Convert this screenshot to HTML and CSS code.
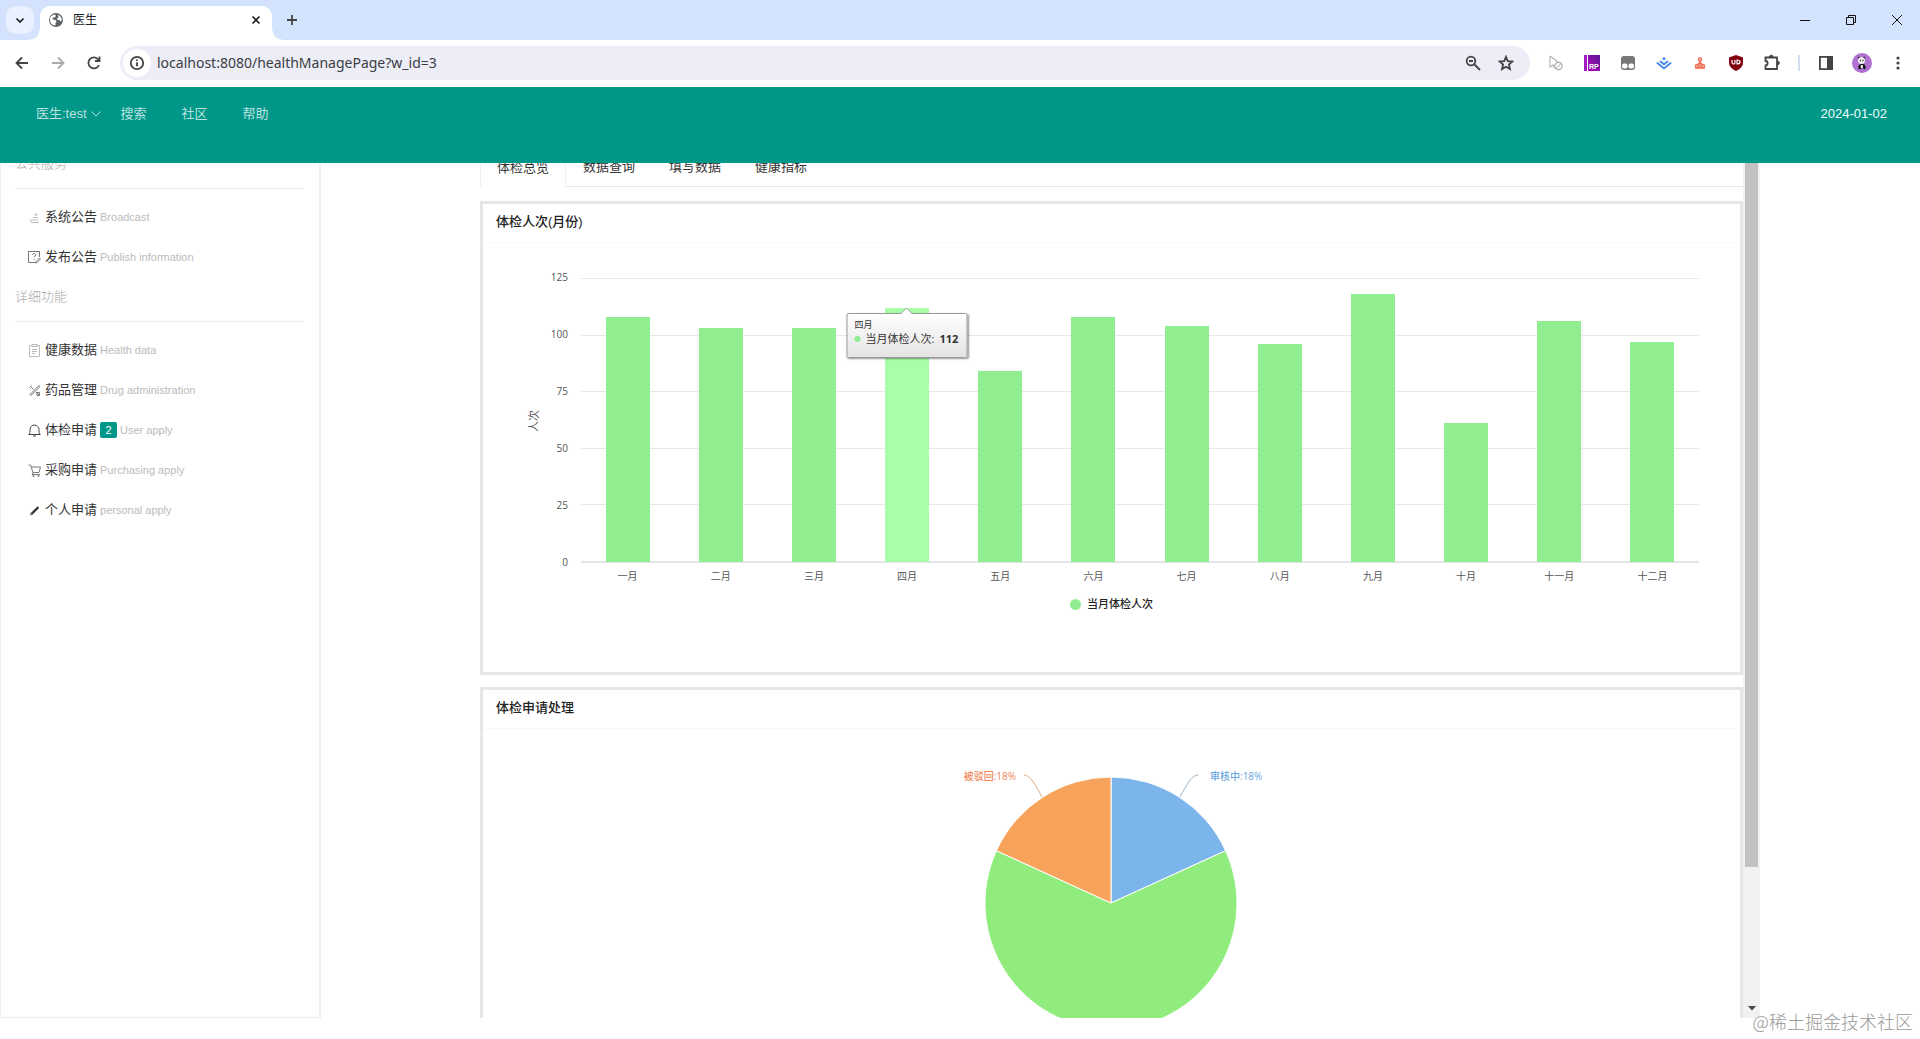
FILE: index.html
```html
<!DOCTYPE html>
<html lang="zh-CN">
<head>
<meta charset="utf-8">
<title>医生</title>
<link rel="stylesheet" href="styles.css">
</head>
<body>
<div class="tabstrip">
  <button class="tab-search" aria-label="搜索标签页"><svg width="12" height="12" viewBox="0 0 12 12"><path d="M2.500 4.500 6 8l3.500-3.500" class="ink"/></svg></button>
  <div class="browser-tab">
    <svg width="16" height="16" viewBox="0 0 16 16"><circle cx="8" cy="8" r="7" fill="#5f6368"/><path d="M2 6c1-2 3-3.500 5-3.500l1 1.500-1.500 1.500H5L4.500 7.500l3 .5 1 1.500-1 1.500v2.500C4 13.500 1.800 10.500 2 7.500zM10 2.800c2.500 1 3.800 3 3.900 5.500l-1.400 1.200-1-1.500H9.500L9 6.500l1.500-1z" fill="#fff"/></svg>
    <span class="tab-title">医生</span>
    <button class="plain" aria-label="关闭"><svg width="12" height="12" viewBox="0 0 12 12"><path d="M2.500 2.500l7 7m0-7-7 7" class="ink"/></svg></button>
  </div>
  <button class="new-tab plain" aria-label="新标签页"><svg width="14" height="14" viewBox="0 0 14 14"><path d="M7 2v10M2 7h10" class="grey-ink"/></svg></button>
  <div class="window-controls">
    <button class="plain" aria-label="最小化"><svg width="12" height="12" viewBox="0 0 12 12"><path d="M1 6.500h10" class="thin"/></svg></button>
    <button class="plain" aria-label="还原"><svg width="12" height="12" viewBox="0 0 12 12"><path d="M1.500 3.500h7v7h-7zM3.500 3.500v-2h7v7h-2" class="thin"/></svg></button>
    <button class="plain" aria-label="关闭窗口"><svg width="12" height="12" viewBox="0 0 12 12"><path d="M1 1l10 10M11 1 1 11" class="thin"/></svg></button>
  </div>
</div>

<div class="toolbar">
  <button class="tool plain" aria-label="后退"><svg width="16" height="16" viewBox="0 0 16 16"><path d="M14 8H3m5-5.500L2.500 8 8 13.500" class="grey-ink"/></svg></button>
  <button class="tool plain dim" aria-label="前进"><svg width="16" height="16" viewBox="0 0 16 16"><path d="M2 8h11M8 2.500 13.500 8 8 13.500" class="grey-ink"/></svg></button>
  <button class="tool plain" aria-label="刷新"><svg width="16" height="16" viewBox="0 0 16 16"><path d="M13 10A5.500 5.500 0 1 1 12.300 4.500L13 6M13.500 1.500V6H9" class="grey-ink"/></svg></button>
  <div class="omnibox">
    <span class="site-info"><svg width="16" height="16" viewBox="0 0 16 16"><circle cx="8" cy="8" r="6.200" class="grey-ink"/><path d="M8 7.300v4M8 4.500v1.600" class="grey-ink"/></svg></span>
    <input class="url" type="text" aria-label="地址" value="localhost:8080/healthManagePage?w_id=3">
    <button class="omni-btn plain" aria-label="缩放"><svg width="16" height="16" viewBox="0 0 16 16"><circle cx="6" cy="6" r="4.300" class="grey-ink"/><path d="M9.500 9.500 15 15M4 6h4" class="grey-ink"/></svg></button>
    <button class="omni-btn plain" aria-label="收藏"><svg width="16" height="16" viewBox="0 0 16 16"><path d="M8 1.800l1.800 4.300 4.600.4-3.500 3 1.100 4.600L8 11.700l-4 2.400 1.100-4.600-3.500-3 4.600-.4z" class="grey-ink"/></svg></button>
  </div>
  <button class="tool plain" aria-label="扩展 1"><svg width="16" height="16" viewBox="0 0 16 16"><path d="M2 1v11l3-2 1.500 3.500M2 1l8 6" fill="none" stroke="#b5b5b5" stroke-width="1.200"/><circle cx="10.500" cy="11" r="3.600" fill="#fff" stroke="#aaa" stroke-width="1.200"/><path d="M8 13.500l5-5" stroke="#aaa"/></svg></button>
  <button class="tool plain" aria-label="Axure RP"><svg width="16" height="16" viewBox="0 0 16 16"><defs><linearGradient id="rp" x1="0" y1="1" x2="1" y2="0"><stop offset="0" stop-color="#b010b8"/><stop offset="1" stop-color="#5a1098"/></linearGradient></defs><path fill="#a01cc0" d="M0 0h3v16H0z"/><path fill="url(#rp)" d="M4 0h12v16H4z"/><text x="5" y="14" class="rp">RP</text></svg></button>
  <button class="tool plain" aria-label="扩展 3"><svg width="16" height="16" viewBox="0 0 16 16"><rect x="1" y="1" width="14" height="14" rx="3" fill="#777"/><rect x="2" y="8.500" width="5.500" height="5" rx="2" fill="#fff"/><rect x="8.500" y="8.500" width="5.500" height="5" rx="2" fill="#fff"/></svg></button>
  <button class="tool plain" aria-label="掘金"><svg width="16" height="16" viewBox="0 0 16 16"><path d="M.8 7.500 8 13.500l7.200-6M4 6 8 9.300l4-3.300" fill="none" stroke="#3f86e0" stroke-width="1.700"/><path d="M8 2l2 1.700-2 1.600-2-1.600z" fill="#3f86e0"/></svg></button>
  <button class="tool plain" aria-label="扩展 5"><svg width="16" height="16" viewBox="0 0 16 16"><g fill="none" stroke="#ef6a50" stroke-width="1.400"><circle cx="8" cy="4.500" r="1.500"/><path d="M8 6v7M8 7.500 5 10m3-2.500 3 2.500M3 13h10"/><circle cx="5" cy="11" r="1.500"/><circle cx="11" cy="11" r="1.500"/></g></svg></button>
  <button class="tool plain" aria-label="uBlock"><svg width="16" height="16" viewBox="0 0 16 16"><path d="M8 0l7 2.500v5c0 4-3 6.500-7 8.500-4-2-7-4.500-7-8.500v-5z" fill="#800010"/><path d="M4 5v2.500a1.500 1.500 0 0 0 3 0V5m2 0v4c4 0 4-4 0-4z" fill="none" stroke="#fff" stroke-width="1.200"/></svg></button>
  <button class="tool plain" aria-label="扩展程序"><svg width="18" height="18" viewBox="0 0 18 18"><path d="M2.500 3.500h11.500v11.500H2.500v-3.500c2.800 0 2.800-4.500 0-4.500z" class="grey-ink"/><path d="M6.500 3a1.800 1.800 0 0 1 3.600 0zM14.500 7.200a1.800 1.800 0 0 1 0 3.600z" fill="#444" stroke="#444"/></svg></button>
  <span class="divider"></span>
  <button class="tool plain" aria-label="侧边栏"><svg width="16" height="16" viewBox="0 0 16 16"><path d="M1.900 1.900h12.200v12.200H1.900z" class="grey-ink"/><path d="M9 2h5v12H9z" fill="#444"/></svg></button>
  <button class="tool plain" aria-label="用户"><svg width="20" height="20" viewBox="0 0 20 20"><circle cx="10" cy="10" r="10" fill="#b070d0"/><circle cx="9.500" cy="7.500" r="3.500" fill="#eee"/><path d="M6 5l1.500-1M13 5l-1.500-1M8 7.500h1M10.500 7.500h1" stroke="#222" stroke-width="1.300"/><path d="M6.500 16c-.5-4 1-5 3.500-5s4 1 3.500 5h-2l-1-3-1.500 3z" fill="#111"/><path d="M8.700 12h2.200v3H8.700z" fill="#eee"/></svg></button>
  <button class="tool plain" aria-label="菜单"><svg width="16" height="16" viewBox="0 0 16 16"><g fill="#444"><circle cx="8" cy="3" r="1.600"/><circle cx="8" cy="8" r="1.600"/><circle cx="8" cy="13" r="1.600"/></g></svg></button>
</div>

<header class="site-header">
  <nav class="site-nav">
    <a href="#" class="user">医生:test <svg width="10" height="6" viewBox="0 0 10 6"><path d="M.5.500 5 5 9.500.500" fill="none" stroke="currentColor"/></svg></a>
    <a href="#">搜索</a>
    <a href="#">社区</a>
    <a href="#">帮助</a>
  </nav>
  <time datetime="2024-01-02">2024-01-02</time>
</header>

<div class="workspace">
  <aside class="sidebar">
    <h2>公共服务</h2>
    <hr>
    <a href="#"><svg class="pale" width="13" height="13" viewBox="0 0 13 13"><path d="M3 11.500h8M4 9h6M5 6.500h5M6 4h3l-1-2M3 8v3"/></svg><span>系统公告</span><small>Broadcast</small></a>
    <a href="#"><svg width="13" height="13" viewBox="0 0 13 13"><path d="M7 11.500H.5v-11h11V6M4.500 4c0-2 3.200-2 3.200 0C7.700 5 6 5 6 6.500M6 8v1M7.500 11l4-4 1 1-4 4H7.500z"/></svg><span>发布公告</span><small>Publish information</small></a>
    <h2>详细功能</h2>
    <hr>
    <a href="#"><svg class="pale" width="13" height="13" viewBox="0 0 13 13"><path d="M4 1.500H1.500v11h10v-11H9M4 .5h5v2H4zM4 5.500h5M4 7.500h5M4 9.500h3"/></svg><span>健康数据</span><small>Health data</small></a>
    <a href="#"><svg width="13" height="13" viewBox="0 0 13 13"><path d="M2 2l3.500 3.500M11 1.500 2 10.500l1 1 8-8zM8 8l3 3M1.500 3.500l2-2M9 8.500h2.500v3H9z"/></svg><span>药品管理</span><small>Drug administration</small></a>
    <a href="#"><svg class="dark" width="13" height="13" viewBox="0 0 13 13"><path d="M.8 10.500h11.400L11 8.500V5.500a4.500 4.500 0 0 0-9 0v3zM5 12h3"/></svg><span>体检申请</span><b class="badge">2</b><small>User apply</small></a>
    <a href="#"><svg width="13" height="13" viewBox="0 0 13 13"><path d="M.5 1h2L5 8.500h6L12.500 3H3.500M5 8.500 4 10.500h8"/><circle cx="5.500" cy="12" r=".7"/><circle cx="10.500" cy="12" r=".7"/></svg><span>采购申请</span><small>Purchasing apply</small></a>
    <a href="#"><svg width="13" height="13" viewBox="0 0 13 13"><path d="M2.500 11l.7-2.300L9.500 2.500l1.500 1.400-6.300 6.300z" fill="#333"/></svg><span>个人申请</span><small>personal apply</small></a>
  </aside>

  <main class="viewport">
    <div class="pane">
      <nav class="tabs">
        <a href="#" class="active">体检总览</a><a href="#">数据查询</a><a href="#">填写数据</a><a href="#">健康指标</a>
      </nav>

      <section class="card">
        <h3>体检人次(月份)</h3>
        <div class="chart">
          <div class="axis-title"><span>人次</span></div>
          <div class="y-labels"><span>125</span><span>100</span><span>75</span><span>50</span><span>25</span><span>0</span></div>
          <div class="gridlines"><i></i><i></i><i></i><i></i><i></i></div>
          <div class="bars">
            <div class="bar" style="height:86.4%"></div>
            <div class="bar" style="height:82.4%"></div>
            <div class="bar" style="height:82.4%"></div>
            <div class="bar hover" style="height:89.6%">
              <div class="tooltip">
                <svg class="arrow" width="12" height="7" viewBox="0 0 12 7"><path d="M0 7 6 1l6 6" fill="#fff" stroke="#999"/></svg>
                <p class="tip-title">四月</p>
                <p class="tip-row"><span class="tip-dot"></span>当月体检人次: <b>112</b></p>
              </div>
            </div>
            <div class="bar" style="height:67.2%"></div>
            <div class="bar" style="height:86.4%"></div>
            <div class="bar" style="height:83.2%"></div>
            <div class="bar" style="height:76.8%"></div>
            <div class="bar" style="height:94.4%"></div>
            <div class="bar" style="height:48.8%"></div>
            <div class="bar" style="height:84.8%"></div>
            <div class="bar" style="height:77.6%"></div>
          </div>
          <div class="x-labels"><span>一月</span><span>二月</span><span>三月</span><span>四月</span><span>五月</span><span>六月</span><span>七月</span><span>八月</span><span>九月</span><span>十月</span><span>十一月</span><span>十二月</span></div>
        </div>
        <div class="legend"><span class="legend-dot"></span>当月体检人次</div>
      </section>

      <section class="card">
        <h3>体检申请处理</h3>
        <svg class="pie" width="400" height="340" viewBox="1 0 400 340">
          <g stroke="#fff">
            <path d="M200 174V48A126 126 0 0 1 314.600 121.700z" fill="#7cb5ec"/>
            <path d="M200 174 314.600 121.700A126 126 0 1 1 85.400 121.700z" fill="#90ed7d"/>
            <path d="M200 174 85.400 121.700A126 126 0 0 1 200 48z" fill="#f7a35c"/>
          </g>
          <path d="M287 46c-6 0-11 9-18 22" fill="none" stroke="#9db4c8"/>
          <path d="M113 46c6 0 11 9 18 22" fill="none" stroke="#d8ab88"/>
          <text x="299" y="51" fill="#6ba6e0">审核中:18%</text>
          <text x="105" y="51" fill="#f0895a" text-anchor="end">被驳回:18%</text>
        </svg>
      </section>
    </div>
    <div class="scrollbar"><div class="thumb"></div><svg width="8" height="5" viewBox="0 0 8 5"><path d="M0 0h8L4 4.500z" fill="#444"/></svg></div>
  </main>
</div>
<div class="watermark">@稀土掘金技术社区</div>
</body>
</html>
```
FILE: styles.css
```css
* { box-sizing: border-box; }

body {
  margin: 0;
  height: 100vh;
  display: flex;
  flex-direction: column;
  overflow: hidden;
  background: #fff;
  color: #333;
  font: 13px/20px "Liberation Sans", "Noto Sans CJK SC", sans-serif;
}

a { color: inherit; text-decoration: none; }
h2, h3, p { margin: 0; font-weight: 400; }
svg { display: block; flex: none; }

.plain {
  display: flex;
  align-items: center;
  justify-content: center;
  padding: 0;
  border: 0;
  background: none;
}

.ink, .grey-ink, .thin { fill: none; stroke: #202124; stroke-width: 2; }
.ink { stroke-width: 1.7; }
.grey-ink { stroke: #444; stroke-width: 1.8; }
.thin { stroke: #111; stroke-width: 1; }

/* browser frame */
.tabstrip {
  display: flex;
  align-items: center;
  height: 40px;
  padding-left: 6px;
  background: #d3e3fd;
}

.tab-search {
  display: flex;
  align-items: center;
  justify-content: center;
  width: 28px;
  height: 28px;
  margin-right: 6px;
  padding: 0;
  border: 0;
  border-radius: 10px;
  background: #e9f0fe;
}

.browser-tab {
  position: relative;
  display: flex;
  align-items: center;
  align-self: flex-end;
  width: 232px;
  height: 34px;
  padding: 0 10px 6px 8px;
  border-radius: 10px 10px 0 0;
  background: #fff;
}

.browser-tab::before, .browser-tab::after {
  content: "";
  position: absolute;
  bottom: 0;
  width: 10px;
  height: 10px;
}
.browser-tab::before { left: -10px; background: radial-gradient(circle at 0 0, transparent 9px, #fff 10px); }
.browser-tab::after { right: -10px; background: radial-gradient(circle at 100% 0, transparent 9px, #fff 10px); }

.tab-title { flex: 1; margin-left: 9px; color: #202124; font-size: 12px; }
.new-tab { width: 28px; height: 28px; margin-left: 6px; }
.window-controls { display: flex; margin-left: auto; }
.window-controls button { width: 46px; height: 40px; }

.toolbar {
  display: flex;
  align-items: center;
  height: 47px;
  padding: 0 4px 2px;
  background: #fff;
  box-shadow: 0 -8px 0 #d3e3fd;
  clip-path: inset(0);
}

.tool { width: 36px; height: 36px; flex: none; }
.dim { opacity: .45; }

.omnibox {
  display: flex;
  align-items: center;
  flex: 1;
  height: 34px;
  margin: 0 8px;
  padding: 0 8px 0 3px;
  border-radius: 17px;
  background: #ecedf7;
}

.site-info {
  display: flex;
  align-items: center;
  justify-content: center;
  width: 28px;
  height: 28px;
  border-radius: 50%;
  background: #fff;
}

.url {
  flex: 1;
  min-width: 0;
  margin-left: 6px;
  padding: 0;
  border: 0;
  outline: 0;
  background: none;
  color: #3c3e44;
  font: 14px/20px "Noto Sans", sans-serif;
}

.omni-btn { width: 33px; height: 28px; }
.rp { fill: #fff; font: bold 7px "Liberation Sans", sans-serif; }
.divider { width: 2px; height: 16px; margin: 0 8px; background: #d5dcf0; }

/* site header */
.site-header {
  display: flex;
  justify-content: space-between;
  flex: none;
  height: 76px;
  padding: 0 33px 0 36px;
  background: #009688;
  color: #b8e3df;
  line-height: 54px;
}

.site-nav { display: flex; align-items: flex-start; }
.site-nav a + a { margin-left: 35px; }
.site-nav .user { display: flex; align-items: center; gap: 4px; }
.site-nav .user + a { margin-left: 20px; }
.site-header time { color: #f0fffd; }

/* body of the page, scrolled a little under the header */
.workspace {
  display: flex;
  flex: 1;
  min-height: 0;
  margin-bottom: 21px;
  overflow: hidden;
}

.sidebar {
  flex: none;
  width: 321px;
  margin-top: -20px;
  padding: 0 15px 0 14px;
  border: 1px solid #eee;
  border-right-width: 2px;
}

.sidebar h2 { color: #aaa; font-size: 13px; line-height: 40px; font-weight: 300; }
.sidebar hr { height: 1px; margin: 4px 0 8px; border: 0; background: #eee; }
.sidebar a {
  display: flex;
  align-items: center;
  gap: 3px;
  height: 40px;
  padding-left: 13px;
}
.sidebar a span { margin-left: 1px; color: #333; }
.sidebar small { color: #bbb; font-size: 11px; line-height: 12px; }
.sidebar svg { fill: none; stroke: #777; }
.sidebar svg.pale { stroke: #bbb; }
.sidebar svg.dark { stroke: #444; }

.badge {
  width: 17px;
  border-radius: 2px;
  background: #009688;
  color: #fff;
  font-size: 11px;
  font-weight: 400;
  line-height: 16px;
  text-align: center;
}

.viewport { display: flex; flex: 1; min-width: 0; margin: 0 160px 0 159px; }
.pane { flex: 1; min-width: 0; margin-top: -16px; }

.tabs { display: flex; height: 40px; border-bottom: 1px solid #e8e8e8; color: #333; }
.tabs a { height: 40px; padding: 0 17px; line-height: 40px; }
.tabs .active {
  padding: 0 16px;
  border: 1px solid #eee;
  border-bottom-color: #fff;
  background: #fff;
}

.card {
  height: 474px;
  margin: 14px 0 12px;
  border: 3px solid #e6e6e6;
}
.card + .card { margin-top: 12px; }
.card h3 {
  height: 39px;
  padding: 0 13px;
  border-bottom: 1px solid #f8f8f8;
  color: #222;
  font-size: 13px;
  font-weight: 500;
  line-height: 35px;
}

/* column chart */
.chart {
  display: grid;
  grid-template-columns: 12px 28px 1fr;
  grid-template-rows: 285px 26px;
  padding: 35px 41px 0 45px;
  color: #555;
  font: 10px/12px "Open Sans", "Noto Sans CJK SC", sans-serif;
}
.axis-title { display: flex; align-items: center; justify-content: center; font-size: 11px; }
.axis-title span { writing-mode: vertical-rl; text-orientation: sideways; transform: rotate(180deg); }
.y-labels {
  display: flex;
  flex-direction: column;
  justify-content: space-between;
  margin: -7px 0 -5px;
  text-align: right;
}
.gridlines, .bars { grid-area: 1 / 3; margin-left: 13px; }
.gridlines { display: flex; flex-direction: column; border-bottom: 2px solid #e2e6e6; }
.gridlines i { flex: 1; border-top: 1px solid #e8e8e8; }
.bars, .x-labels { display: grid; grid-template-columns: repeat(12, 1fr); justify-items: center; }
.bars { align-items: end; padding-bottom: 1px; }
.bar { position: relative; width: 44px; background: #90ee90; }
.bar.hover { background: #a9ffa9; }
.x-labels { grid-column: 3; align-items: center; margin-left: 13px; }

.tooltip {
  position: absolute;
  z-index: 1;
  top: 5px;
  left: 50%;
  transform: translateX(-50%);
  width: 121px;
  height: 45px;
  padding: 5px 7px;
  border: 1px solid #999;
  border-radius: 2px;
  background: linear-gradient(#fff, #e4e4e4);
  box-shadow: 1px 1px 2px rgba(0, 0, 0, .4);
  color: #333;
  white-space: nowrap;
}
.arrow { position: absolute; top: -7px; left: 53px; }
.tip-title { font-size: 9px; }
.tip-row { display: flex; align-items: center; gap: 5px; font-size: 11px; line-height: 16px; }
.tip-row b { font-size: 11px; }
.tip-dot { width: 6px; height: 6px; border-radius: 50%; background: #90ee90; }

.legend {
  display: flex;
  align-items: center;
  justify-content: center;
  gap: 6px;
  margin-top: 5px;
  color: #222;
  font-size: 11px;
  font-weight: 500;
}
.legend-dot { width: 11px; height: 11px; border-radius: 50%; background: #90ee90; }

.pie { margin: 0 auto; font: 500 10px "Open Sans", "Noto Sans CJK SC", sans-serif; }

/* scroll bar beside the pane */
.scrollbar {
  display: flex;
  flex: none;
  flex-direction: column;
  align-items: center;
  justify-content: space-between;
  width: 17px;
  padding-bottom: 7px;
  background: #f1f1f1;
}
.thumb { width: 13px; height: 83%; background: #c1c1c1; }

.watermark {
  position: absolute;
  right: 7px;
  bottom: 5px;
  color: #999;
  font: 300 18px/26px "Noto Sans CJK SC", sans-serif;
}
```
